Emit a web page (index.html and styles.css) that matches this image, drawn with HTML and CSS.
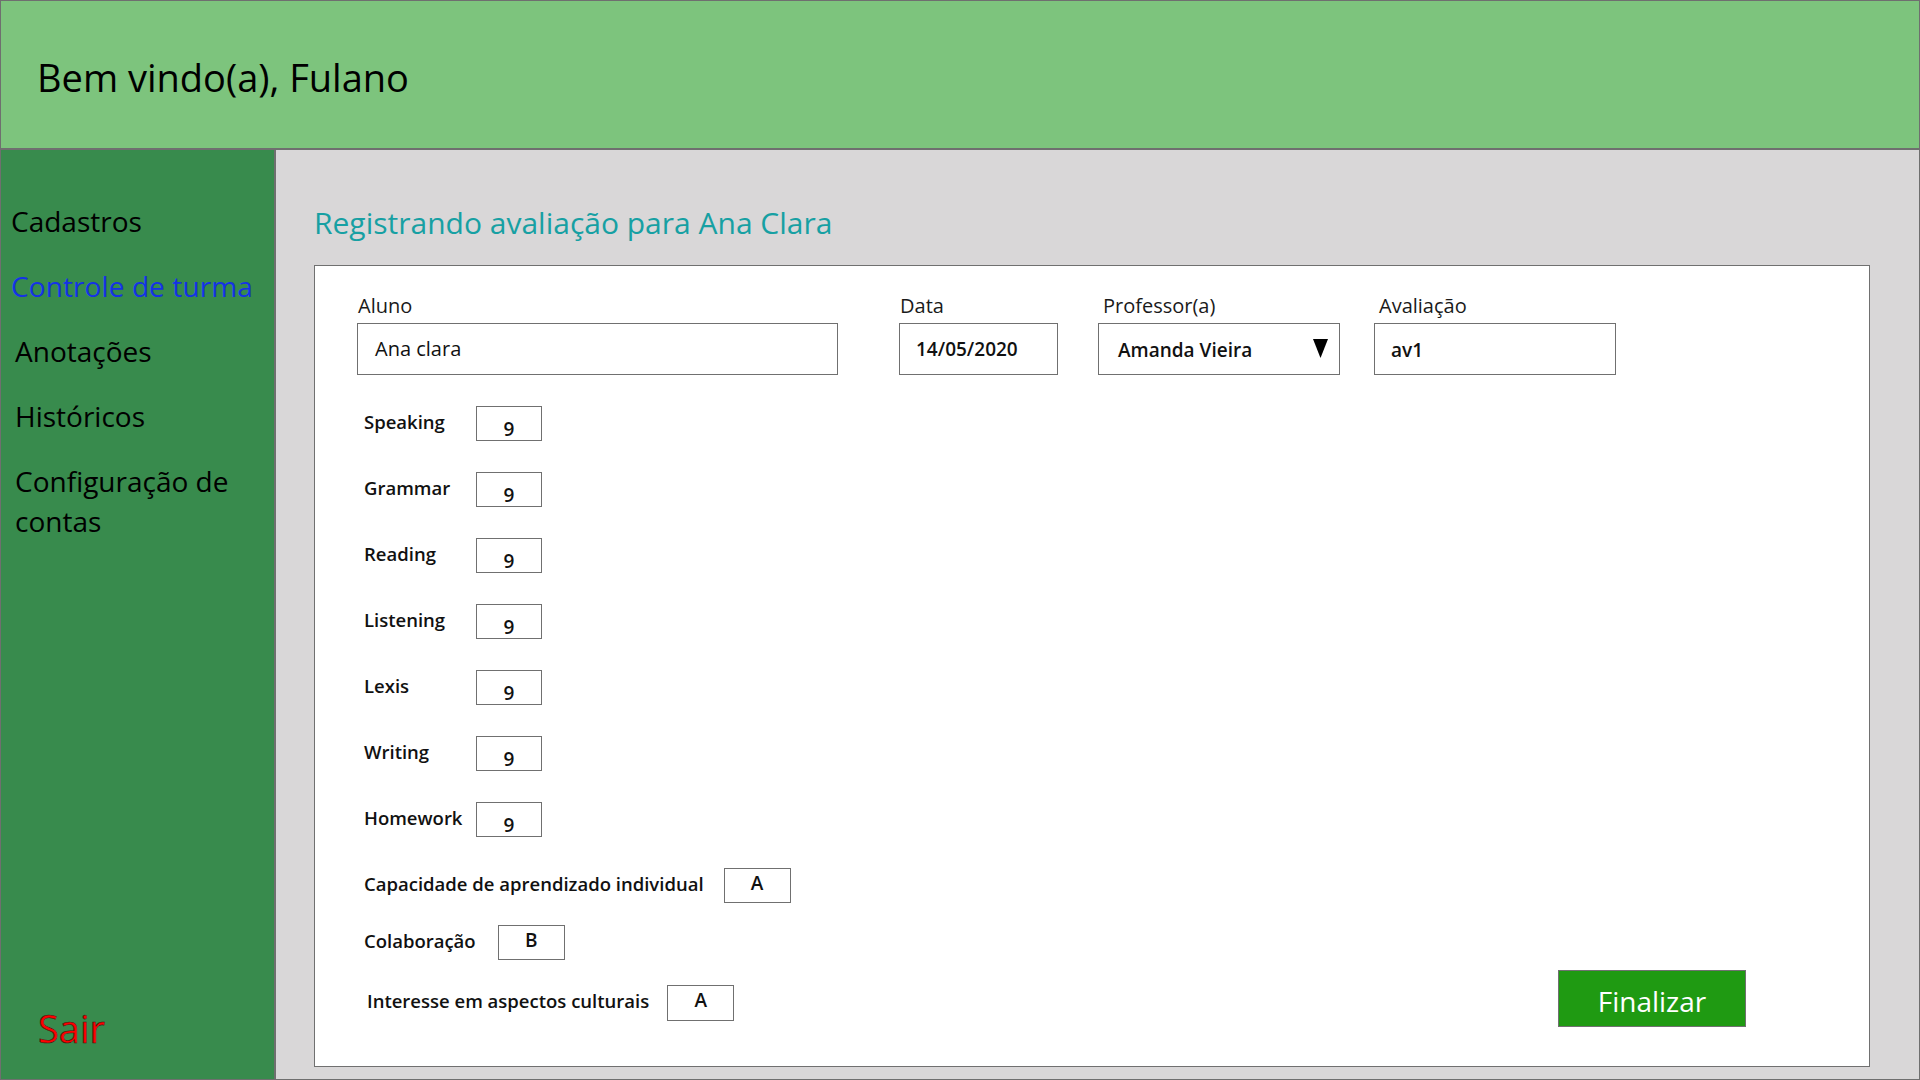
FILE: index.html
```html
<!DOCTYPE html>
<html lang="pt-BR">
<head>
<meta charset="utf-8">
<title>Registrando avaliação</title>
<link rel="stylesheet" href="styles.css">
</head>
<body>
<div class="app">
  <header class="topbar">
    <h1 class="welcome">Bem vindo(a), Fulano</h1>
  </header>
  <div class="layout">
    <nav class="sidebar">
      <ul class="nav">
        <li class="nav-item">Cadastros</li>
        <li class="nav-item nav-item--active">Controle de turma</li>
        <li class="nav-item nav-item--indent">Anotações</li>
        <li class="nav-item nav-item--indent">Históricos</li>
        <li class="nav-item nav-item--indent">Configuração de contas</li>
      </ul>
      <div class="signout">Sair</div>
    </nav>
    <main class="main">
      <h2 class="page-title">Registrando avaliação para Ana Clara</h2>
      <section class="card">
        <div class="fields">
          <div class="field field--aluno">
            <div class="field-label">Aluno</div>
            <div class="box box--plain">Ana clara</div>
          </div>
          <div class="field field--data">
            <div class="field-label">Data</div>
            <div class="box">14/05/2020</div>
          </div>
          <div class="field field--prof">
            <div class="field-label field-label--inset">Professor(a)</div>
            <div class="box box--select">
              <span>Amanda Vieira</span>
              <svg class="caret" width="15" height="19" viewBox="0 0 15 19"><polygon points="0,0 15,0 7.5,19" fill="#000"/></svg>
            </div>
          </div>
          <div class="field field--aval">
            <div class="field-label field-label--inset">Avaliação</div>
            <div class="box">av1</div>
          </div>
        </div>

        <div class="grades">
          <div class="grade-row"><span class="grade-label">Speaking</span><span class="score score--num">9</span></div>
          <div class="grade-row"><span class="grade-label">Grammar</span><span class="score score--num">9</span></div>
          <div class="grade-row"><span class="grade-label">Reading</span><span class="score score--num">9</span></div>
          <div class="grade-row"><span class="grade-label">Listening</span><span class="score score--num">9</span></div>
          <div class="grade-row"><span class="grade-label">Lexis</span><span class="score score--num">9</span></div>
          <div class="grade-row"><span class="grade-label">Writing</span><span class="score score--num">9</span></div>
          <div class="grade-row"><span class="grade-label">Homework</span><span class="score score--num">9</span></div>
          <div class="grade-row grade-row--inline"><span class="grade-label">Capacidade de aprendizado individual</span><span class="score score--letter">A</span></div>
          <div class="grade-row grade-row--inline grade-row--tight"><span class="grade-label">Colaboração</span><span class="score score--letter">B</span></div>
          <div class="grade-row grade-row--inline grade-row--last">
            <span class="grade-label grade-label--inset">Interesse em aspectos culturais</span>
            <span class="score score--letter score--tall">A</span>
            <button class="finish">Finalizar</button>
          </div>
        </div>
      </section>
    </main>
  </div>
</div>
</body>
</html>
```

FILE: styles.css
```css
* { box-sizing: border-box; }

html, body {
  margin: 0;
  padding: 0;
}

body {
  font-family: "Open Sans", "Noto Sans", sans-serif;
  color: #000;
}

.app {
  width: 1920px;
  height: 1080px;
  border: 1px solid #6f6f6f;
  display: flex;
  flex-direction: column;
  overflow: hidden;
}

/* Header */
.topbar {
  flex: 0 0 149px;
  background: #7dc47d;
  border-bottom: 2px solid #6f6f6f;
  padding: 50px 0 0 36px;
}

.welcome {
  margin: 0;
  font-size: 38px;
  line-height: 52px;
  font-weight: 400;
  color: #000;
}

/* Layout */
.layout {
  flex: 1;
  display: flex;
  min-height: 0;
}

.sidebar {
  width: 275px;
  flex: 0 0 275px;
  background: #388b4d;
  border-right: 2px solid #6f6f6f;
  display: flex;
  flex-direction: column;
  padding: 51px 0 28px 10px;
}

.nav {
  list-style: none;
  margin: 0;
  padding: 0;
  display: flex;
  flex-direction: column;
  gap: 25px;
}

.nav-item {
  font-size: 28px;
  line-height: 40px;
  color: #000;
}

.nav-item--active {
  color: #1432e6;
  white-space: nowrap;
  letter-spacing: 0.1px;
}

.nav-item--indent {
  padding-left: 4px;
}

.signout {
  margin-top: auto;
  padding-left: 27px;
  font-size: 38px;
  line-height: 46px;
  color: #ff0000;
  -webkit-text-stroke: 0.6px #3a1a10;
}

/* Main */
.main {
  flex: 1;
  background: #d9d7d8;
  padding: 53px 49px 12px 38px;
  display: flex;
  flex-direction: column;
}

.page-title {
  margin: 0;
  font-size: 30px;
  line-height: 40px;
  font-weight: 400;
  color: #17a0a3;
}

.card {
  margin-top: 22px;
  flex: 1;
  background: #fff;
  border: 1px solid #707070;
  padding: 28px 0 0 42px;
}

/* Top fields */
.fields {
  display: flex;
  align-items: flex-start;
}

.field-label {
  font-size: 20px;
  line-height: 24px;
  color: #1a1a1a;
  margin-bottom: 5px;
  padding-left: 1px;
}

.field-label--inset {
  padding-left: 5px;
}

.box {
  height: 52px;
  border: 1px solid #707070;
  display: flex;
  align-items: center;
  padding: 0 16px;
  font-size: 19px;
  font-weight: 600;
  color: #111;
  background: #fff;
}

.box--plain {
  font-size: 20px;
  font-weight: 400;
  padding-left: 17px;
  padding-bottom: 2px;
}

.box--select {
  justify-content: space-between;
  padding: 2px 11px 0 19px;
}

.caret {
  display: block;
  margin-top: -4px;
}

.field--aluno { width: 481px; }
.field--data { width: 159px; margin-left: 61px; }
.field--prof { width: 242px; margin-left: 40px; }
.field--aval { width: 242px; margin-left: 34px; }
.field--aval .box { padding-top: 2px; }

/* Grades */
.grades {
  margin-top: 31px;
  padding-left: 7px;
  display: flex;
  flex-direction: column;
}

.grade-row {
  display: grid;
  grid-template-columns: 112px 66px;
  align-items: center;
  height: 35px;
  margin-top: 31px;
}

.grade-row:first-child {
  margin-top: 0;
}

.grade-row--inline {
  display: flex;
  gap: 20px;
}

.grade-row--tight {
  margin-top: 22px;
  gap: 22px;
}

.grade-row--last {
  height: auto;
  margin-top: 10px;
  gap: 18px;
}

.grade-label {
  font-size: 18.5px;
  font-weight: 600;
  line-height: 24px;
  margin-bottom: 4px;
  white-space: nowrap;
  color: #111;
}

.grade-label--inset {
  padding-left: 3px;
}

.score {
  width: 66px;
  height: 35px;
  border: 1px solid #707070;
  text-align: center;
  font-size: 19px;
  font-weight: 600;
  color: #111;
}

.score--num {
  padding-top: 11px;
  line-height: 23px;
}

.score--letter {
  width: 67px;
  line-height: 28px;
}

.score--tall {
  height: 36px;
}

.finish {
  margin-left: auto;
  margin-right: 123px;
  margin-bottom: 9px;
  width: 188px;
  height: 57px;
  background: #1f9a12;
  border: 1px solid #707070;
  border-radius: 0;
  color: #fff;
  font-family: "Open Sans", "Noto Sans", sans-serif;
  font-size: 28px;
  line-height: 36px;
  padding: 4px 0 0;
  cursor: pointer;
}
```
